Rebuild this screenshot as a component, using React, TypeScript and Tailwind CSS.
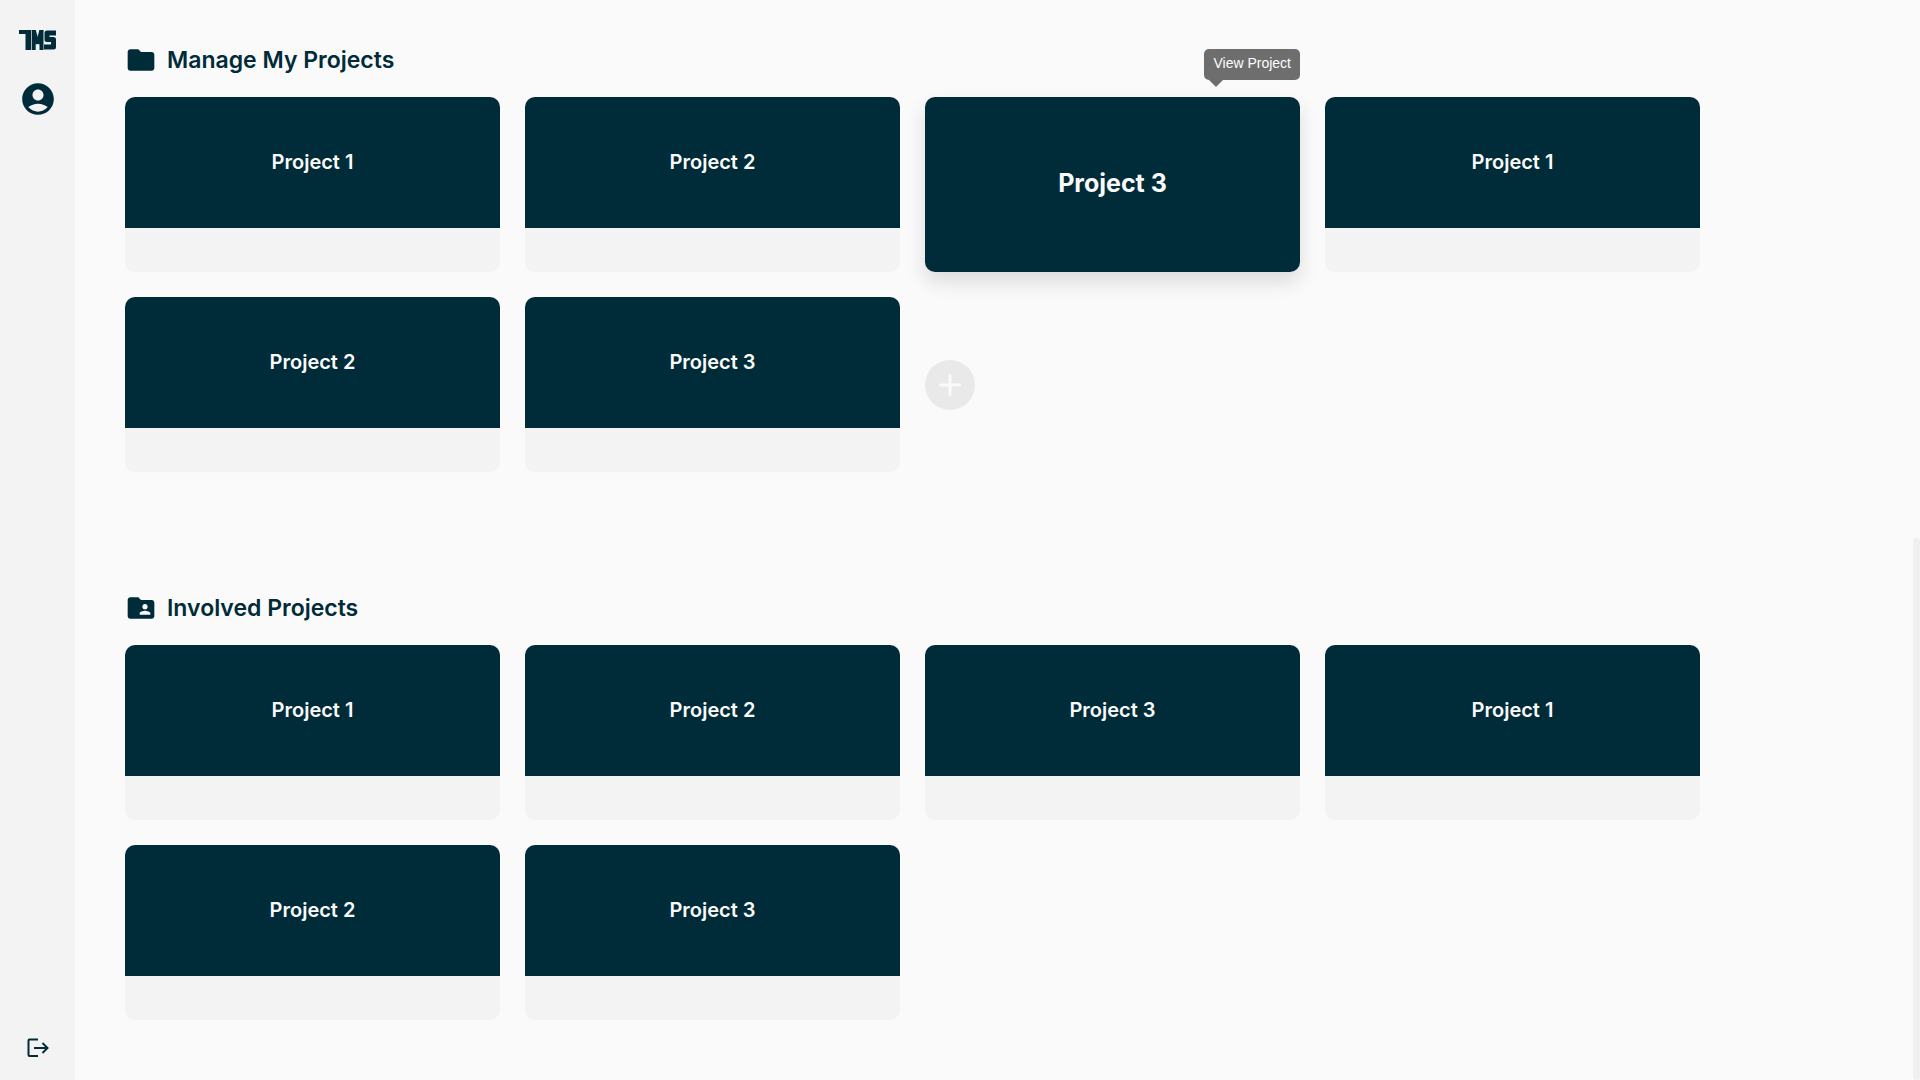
type Project = { id: string; name: string; active?: boolean };

const managed: Project[] = [
  { id: "m1", name: "Project 1" },
  { id: "m2", name: "Project 2" },
  { id: "m3", name: "Project 3", active: true },
  { id: "m4", name: "Project 1" },
  { id: "m5", name: "Project 2" },
  { id: "m6", name: "Project 3" },
];

const involved: Project[] = [
  { id: "i1", name: "Project 1" },
  { id: "i2", name: "Project 2" },
  { id: "i3", name: "Project 3" },
  { id: "i4", name: "Project 1" },
  { id: "i5", name: "Project 2" },
  { id: "i6", name: "Project 3" },
];

function Logo() {
  return (
    <svg viewBox="0 0 37 20" className="h-5 w-[37px]" aria-hidden="true">
      <g fill="currentColor">
        <rect x="0" y="0" width="12" height="4" />
        <rect x="6.500" y="0" width="5.500" height="20" />
        <rect x="12.700" y="0" width="4" height="20" />
        <rect x="20.500" y="0" width="4" height="20" />
      </g>
      <g fill="none" stroke="currentColor">
        <line x1="14.700" y1="0" x2="18.600" y2="14" strokeWidth="4" />
        <line x1="22.500" y1="0" x2="18.600" y2="14" strokeWidth="4" />
        <polyline points="37,3 28,3 28,9.500 34.500,9.500 34.500,17 25,17" strokeWidth="5" strokeLinejoin="round" />
      </g>
    </svg>
  );
}

function AccountIcon() {
  return (
    <svg viewBox="0 0 24 24" fill="currentColor" className="size-[38px]" aria-hidden="true">
      <path d="M12 2C6.48 2 2 6.48 2 12s4.48 10 10 10 10-4.48 10-10S17.52 2 12 2zm0 4c1.93 0 3.5 1.57 3.5 3.5S13.93 13 12 13s-3.5-1.57-3.5-3.5S10.07 6 12 6zm0 14c-2.03 0-4.43-.82-6.14-2.88C7.55 15.8 9.68 15 12 15s4.45.8 6.14 2.12C16.43 19.18 14.03 20 12 20z" />
    </svg>
  );
}

function LogoutIcon() {
  return (
    <svg viewBox="0 0 22 20" fill="none" stroke="currentColor" strokeWidth="2" className="h-5 w-[22px]" aria-hidden="true">
      <path d="M11 1.500H2.500Q1.500 1.500 1.500 2.500V17Q1.500 18 2.500 18H11" />
      <path d="M7 10H20.500M15.500 5L20.500 10L15.500 15" />
    </svg>
  );
}

function FolderIcon() {
  return (
    <svg viewBox="0 0 24 24" fill="currentColor" className="size-8" aria-hidden="true">
      <path d="M10 4H4c-1.100 0-1.990.9-1.990 2L2 18c0 1.100.9 2 2 2h16c1.100 0 2-.9 2-2V8c0-1.100-.9-2-2-2h-8l-2-2z" />
    </svg>
  );
}

function SharedFolderIcon() {
  return (
    <svg viewBox="0 0 24 24" fill="currentColor" className="size-8" aria-hidden="true">
      <path d="M20 6h-8l-2-2H4c-1.100 0-1.990.9-1.990 2L2 18c0 1.100.9 2 2 2h16c1.100 0 2-.9 2-2V8c0-1.100-.9-2-2-2zm-5 3c1.100 0 2 .9 2 2s-.9 2-2 2-2-.9-2-2 .9-2 2-2zm4 8h-8v-1c0-1.330 2.670-2 4-2s4 .67 4 2v1z" />
    </svg>
  );
}

function ProjectCard({ project }: { project: Project }) {
  if (project.active) {
    return (
      <div className="relative">
        <button
          type="button"
          aria-describedby="view-project-tip"
          className="flex h-[175px] w-full items-center justify-center rounded-[10px] bg-[#002b38] pb-0.5 text-[25px] font-bold text-[#fafafa] shadow-[0_10px_20px_rgba(0,0,0,0.12)]"
        >
          {project.name}
        </button>
        <div
          id="view-project-tip"
          role="tooltip"
          className="absolute right-0 bottom-full mb-[17px] rounded-[5px] bg-[#6e6e6e] px-[9px] pt-1 pb-[7px] font-['Liberation_Sans',Arial,sans-serif] text-sm whitespace-nowrap text-white"
        >
          View Project
          <span className="absolute top-full left-[5px] border-x-7 border-t-7 border-x-transparent border-t-[#6e6e6e]" />
        </div>
      </div>
    );
  }
  return (
    <button type="button" className="flex h-[175px] flex-col overflow-hidden rounded-[10px] bg-[#f3f3f3]">
      <span className="flex h-3/4 w-full items-center justify-center bg-[#002b38] pb-0.5 text-xl font-semibold text-[#fafafa]">
        {project.name}
      </span>
    </button>
  );
}

export default function App() {
  return (
    <div className="flex h-screen overflow-hidden bg-[#fafafa] font-[Inter,sans-serif] text-[#002b38]">
      <nav aria-label="Main" className="flex w-[75px] shrink-0 flex-col items-center bg-[#f3f3f3] pt-[30px] pb-[22px]">
        <a href="#home" aria-label="TMS">
          <Logo />
        </a>
        <button type="button" aria-label="Account" className="mt-[30px]">
          <AccountIcon />
        </button>
        <button type="button" aria-label="Log out" className="mt-auto">
          <LogoutIcon />
        </button>
      </nav>

      <main className="flex grow flex-col gap-[120px] px-[50px] pt-11">
        <section aria-labelledby="managed-title">
          <div className="mb-[21px] flex items-center gap-[10px]">
            <FolderIcon />
            <h2 id="managed-title" className="text-[23px] leading-8 font-semibold">Manage My Projects</h2>
          </div>
          <div className="grid grid-cols-[repeat(auto-fill,375px)] gap-[25px]">
            {managed.map((p) => (
              <ProjectCard key={p.id} project={p} />
            ))}
            <button
              type="button"
              aria-label="Add project"
              className="flex size-[50px] items-center justify-center self-center rounded-full bg-[#e9e9e9] text-[#fafafa]"
            >
              <svg viewBox="0 0 22 22" className="size-[22px]" fill="none" stroke="currentColor" strokeWidth="3" strokeLinecap="round" aria-hidden="true">
                <path d="M11 1.500V20.500M1.500 11H20.500" />
              </svg>
            </button>
          </div>
        </section>

        <section aria-labelledby="involved-title">
          <div className="mb-[21px] flex items-center gap-[10px]">
            <SharedFolderIcon />
            <h2 id="involved-title" className="text-[23px] leading-8 font-semibold">Involved Projects</h2>
          </div>
          <div className="grid grid-cols-[repeat(auto-fill,375px)] gap-[25px]">
            {involved.map((p) => (
              <ProjectCard key={p.id} project={p} />
            ))}
          </div>
        </section>
      </main>

      <div aria-hidden="true" className="h-[542px] w-[7px] shrink-0 self-end rounded-full bg-[#f0f0f0]" />
    </div>
  );
}
